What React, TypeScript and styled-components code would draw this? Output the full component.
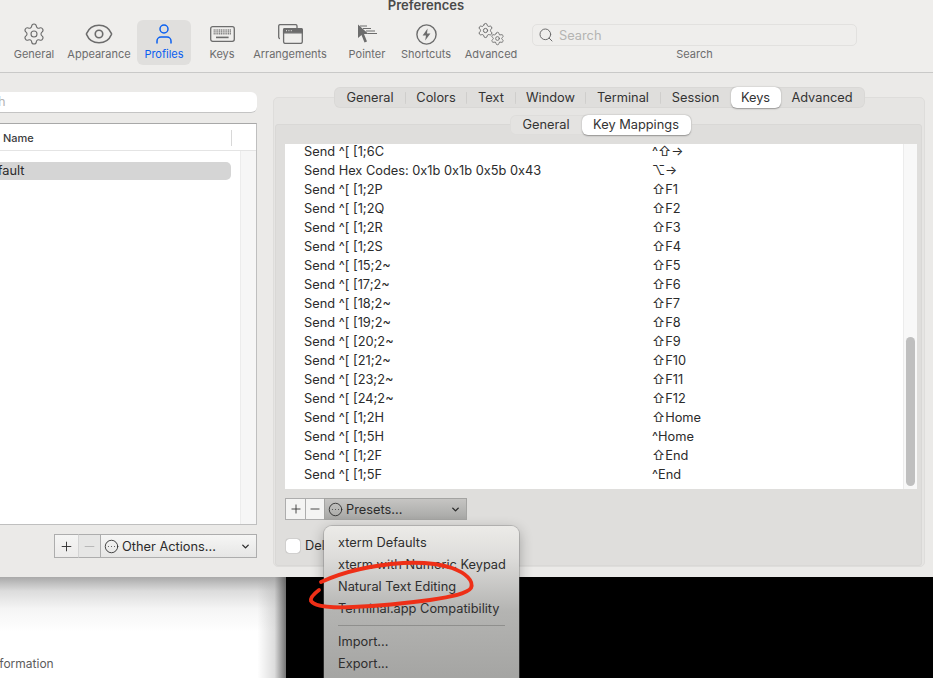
import React from 'react';
import styled, { createGlobalStyle } from 'styled-components';
import { ChevronDown, CircleEllipsis, Eye, Minus, Plus, Search, Settings, User } from 'lucide-react';

const GlobalStyle = createGlobalStyle`
  html, body {
    margin: 0;
    height: 100%;
    overflow: hidden;
    background: #000;
  }
  body {
    font-family: Inter, "Liberation Sans", "DejaVu Sans", sans-serif;
    color: #2b2b2b;
  }
  * {
    box-sizing: border-box;
  }
`;

const Page = styled.div`
  width: 933px;
  height: 678px;
  position: relative;
  overflow: hidden;
`;

const Window = styled.div`
  height: 577px;
  background: #ebeae8;
  box-shadow: 0 1px 0 #b5b5b5;
  display: flex;
  flex-direction: column;
`;

const Toolbar = styled.div`
  height: 73px;
  background: #efeeec;
  border-bottom: 1px solid #c9c9c8;
  flex: none;
`;

const Title = styled.div`
  height: 11px;
  line-height: 11px;
  font-size: 13px;
  font-weight: 600;
  color: #4a4a4a;
  text-align: center;
  padding-right: 81px;
`;

const ToolRow = styled.div`
  display: flex;
  margin-top: 9px;
  height: 45px;
  padding-left: 7px;
`;

const ToolItem = styled.div<{ $active?: boolean; $width: number }>`
  width: ${p => p.$width}px;
  height: 45px;
  flex: none;
  border-radius: 6px;
  background: ${p => (p.$active ? '#e0dfdd' : 'transparent')};
  color: ${p => (p.$active ? '#0a60f0' : '#6c6c6c')};
  display: flex;
  flex-direction: column;
  align-items: center;
  font-size: 11px;
  line-height: 13px;
  white-space: nowrap;
`;

const ToolIcon = styled.div`
  height: 28px;
  display: flex;
  align-items: center;
  justify-content: center;
`;

const ToolSearch = styled.div`
  width: 325px;
  margin-left: -5px;
  padding-top: 4px;
  display: flex;
  flex-direction: column;
  align-items: center;
  font-size: 11px;
  color: #6c6c6c;
`;

const ToolField = styled.div`
  width: 100%;
  height: 22px;
  margin-bottom: 1px;
  border: 1px solid #e2e1df;
  border-radius: 5px;
  display: flex;
  align-items: center;
  gap: 5px;
  padding-left: 5px;
  font-size: 12.8px;
  color: #b4b4b2;
`;

const Body = styled.div`
  flex: 1;
  display: flex;
  min-height: 0;
  padding-top: 14px;
`;

const LeftPane = styled.div`
  width: 317px;
  margin-left: -60px;
  flex: none;
  display: flex;
  flex-direction: column;
`;

const ProfileSearch = styled.div`
  height: 21px;
  margin-top: 5px;
  background: #fff;
  border-radius: 6px;
  border-bottom: 1px solid #c4c4c4;
  font-size: 12.8px;
  line-height: 20px;
  color: #b5b5b5;
  padding-left: 23px;
`;

const ProfileTable = styled.div`
  height: 402px;
  margin-top: 10px;
  border: 1px solid #bfbfbf;
  border-top-color: #a8a8a8;
  background: #fff;
  display: flex;
  flex-direction: column;
`;

const ProfileHead = styled.div`
  height: 27px;
  flex: none;
  border-bottom: 1px solid #e4e4e4;
  display: flex;
  align-items: center;
  font-size: 11px;
  font-weight: 500;
  color: #3c3c3c;
  padding: 2px 0 0 62px;
`;

const HeadDivider = styled.div`
  width: 1px;
  height: 16px;
  background: #d8d8d8;
  margin-left: 197px;
`;

const ProfileBody = styled.div`
  flex: 1;
  display: flex;
`;

const ProfileList = styled.div`
  flex: 1;
  border-right: 1px solid #ececec;
  padding-top: 11px;
`;

const ProfileRow = styled.div`
  height: 18px;
  margin-right: 9px;
  background: #d5d5d5;
  border-radius: 5px;
  font-size: 12.8px;
  line-height: 17px;
  padding-left: 40px;
`;

const ProfileGutter = styled.div`
  width: 15px;
  flex: none;
  background: #f6f6f6;
`;

const ActionRow = styled.div`
  display: flex;
  justify-content: flex-end;
  margin-top: 9px;
  height: 24px;
`;

const SquareButton = styled.div<{ $width: number; $off?: boolean; $dark?: boolean }>`
  width: ${p => p.$width}px;
  flex: none;
  display: flex;
  align-items: center;
  justify-content: center;
  border: 1px solid #adadad;
  margin-right: -1px;
  background: ${p => (p.$dark ? '#f4f4f3' : 'linear-gradient(#f5f5f4, #ecebea)')};
  color: ${p => (p.$off ? '#b4b4b4' : '#303030')};
  ${p => p.$off && 'border-color: #adadad transparent #adadad #d4d4d4; background: #e6e6e5;'}
`;

const PopupButton = styled.div<{ $width: number; $pressed?: boolean }>`
  width: ${p => p.$width}px;
  flex: none;
  display: flex;
  align-items: center;
  gap: 3px;
  padding: 0 5px 0 3px;
  font-size: 12.8px;
  color: #2b2b2b;
  border: 1px solid ${p => (p.$pressed ? '#a4a4a2' : '#adadad')};
  background: ${p => (p.$pressed ? 'linear-gradient(#c6c5c3, #a8a8a6)' : 'linear-gradient(#f6f6f5, #e6e6e5)')};
`;

const PopupLabel = styled.span`
  flex: 1;
`;

const RightPane = styled.div`
  width: 652px;
  margin-left: 16px;
  flex: none;
  display: flex;
  flex-direction: column;
  align-items: center;
`;

const TabBar = styled.div<{ $top?: boolean }>`
  height: ${p => (p.$top ? 21 : 20)}px;
  display: flex;
  align-items: center;
  flex: none;
  position: relative;
  z-index: 2;
  margin-left: ${p => (p.$top ? 0 : 4)}px;
  border-radius: 6px;
  background: ${p => (p.$top ? '#dfdedc' : '#e4e3e1')};
  box-shadow: inset 0 0 0 1px rgba(0, 0, 0, 0.025);
  font-size: 12.8px;
  padding: 0 1px;
  > div {
    padding-bottom: 1px;
  }
`;

const Tab = styled.div<{ $selected?: boolean; $width: number; $line?: boolean }>`
  width: ${p => p.$width}px;
  height: 100%;
  flex: none;
  display: flex;
  align-items: center;
  justify-content: center;
  border-radius: 6px;
  color: #333;
  background: ${p => (p.$line
    ? 'linear-gradient(#cfcecc, #cfcecc) right center / 1px 12px no-repeat'
    : p.$selected ? '#fff' : 'transparent')};
  box-shadow: ${p => (p.$selected ? '0 0.5px 1.5px rgba(0, 0, 0, 0.35)' : 'none')};
`;

const OuterBox = styled.div`
  width: 100%;
  height: 470px;
  margin-top: -11px;
  flex: none;
  background: #e6e5e3;
  border: 1px solid #dedddb;
  border-radius: 5px;
  padding: 17px 2px 0 1px;
  display: flex;
  flex-direction: column;
  align-items: center;
`;

const InnerBox = styled.div`
  width: 100%;
  height: 442px;
  margin-top: -11px;
  flex: none;
  background: #dfdedc;
  border: 1px solid #d9d8d6;
  border-radius: 3px;
  padding: 19px 4px 0 9px;
`;

const MapTable = styled.div`
  height: 345px;
  background: #fff;
  display: flex;
  overflow: hidden;
`;

const MapList = styled.div`
  flex: 1;
  margin-top: -2px;
`;

const MapRow = styled.div`
  height: 19px;
  display: flex;
  align-items: center;
  font-size: 12.8px;
  color: #2b2b2b;
`;

const MapAction = styled.div`
  width: 367px;
  padding-left: 19px;
  flex: none;
  white-space: pre;
`;

const MapKey = styled.div`
  font-family: Inter, "DejaVu Sans", sans-serif;
  white-space: pre;
`;

const MapScroller = styled.div`
  width: 14px;
  flex: none;
  background: #f8f8f8;
  border-left: 1px solid #ececec;
  padding: 0 2px 3px 2px;
  display: flex;
  align-items: flex-end;
`;

const ScrollThumb = styled.div`
  width: 100%;
  height: 149px;
  background: #bfbfbf;
  border-radius: 5px;
`;

const MapActions = styled.div`
  display: flex;
  height: 22px;
  margin-top: 9px;
`;

const DeleteRow = styled.div`
  display: flex;
  align-items: center;
  gap: 5px;
  margin-top: 18px;
  margin-left: 1px;
  font-size: 12.8px;
`;

const Checkbox = styled.div`
  width: 14px;
  height: 14px;
  background: #fff;
  border-radius: 3px;
  box-shadow: 0 0 1px rgba(0, 0, 0, 0.6);
`;

const Below = styled.div`
  height: 101px;
  display: flex;
  background: #000;
`;

const BelowLeft = styled.div`
  width: 286px;
  flex: none;
  background:
    linear-gradient(90deg, rgba(180, 180, 180, 0) 90%, rgba(170, 170, 170, 0.4) 96%, rgba(90, 90, 90, 0.85) 100%),
    linear-gradient(#a9a9a9 0, #dcdcdc 14px, #f5f5f5 32px, #fff 55px);
  font-size: 12px;
  color: #5c5c5c;
  padding: 79px 0 0 0;
  overflow: hidden;
`;

const BelowText = styled.div`
  line-height: 15px;
  margin-left: -11px;
`;

const Menu = styled.div`
  position: absolute;
  left: 324px;
  top: 526px;
  width: 195px;
  height: 162px;
  z-index: 5;
  border-radius: 8px;
  background: linear-gradient(#ecebe8 0, #dedddb 30px, #b4b4b2 85px, #a5a5a3 150px);
  box-shadow: 0 0 0 1px rgba(120, 120, 120, 0.35), 0 4px 14px rgba(0, 0, 0, 0.3);
  padding: 6px 0;
  font-size: 12.8px;
  color: #2e2e2e;
`;

const MenuItem = styled.div`
  height: 22px;
  line-height: 22px;
  padding-left: 14px;
  white-space: nowrap;
`;

const MenuRule = styled.div`
  height: 1px;
  margin: 5px 14px 5px 14px;
  background: #8f8f8d;
`;

const Scribble = styled.svg`
  position: absolute;
  left: 300px;
  top: 555px;
  z-index: 6;
  pointer-events: none;
`;

const iconColor = '#6c6c6c';

function KeyboardIcon() {
  const dots: React.ReactNode[] = [];
  for (let row = 0; row < 3; row++) {
    for (let col = 0; col < 10; col++) {
      dots.push(<rect key={`${row}-${col}`} x={3.6 + col * 1.8} y={3.4 + row * 1.9} width="1.2" height="1.2" fill={iconColor} />);
    }
  }
  return (
    <svg width="25" height="16" viewBox="0 0 25 16" fill="none">
      <rect x="0.7" y="0.7" width="23.6" height="14.6" rx="2" stroke={iconColor} strokeWidth="1.3" />
      {dots}
      <rect x="6" y="10.6" width="12.6" height="1.6" fill={iconColor} />
    </svg>
  );
}

function ArrangementsIcon() {
  return (
    <svg width="25" height="20" viewBox="0 0 25 20" fill="none" stroke={iconColor} strokeWidth="1.3">
      <path d="M2 14.5h-0.2a1.2 1.2 0 0 1-1.1-1.2V2a1.4 1.4 0 0 1 1.4-1.4h15.5A1.4 1.4 0 0 1 19 2v2.4" />
      <rect x="5.6" y="4.6" width="18.7" height="14.8" rx="1.6" />
      <path d="M5.6 5.8a1.2 1.2 0 0 1 1.2-1.2h16.3a1.2 1.2 0 0 1 1.2 1.2v3H5.6z" fill={iconColor} />
      <path d="M8 6.7h1M10.4 6.7h1M12.8 6.7h1" stroke="#efeeec" strokeWidth="1" />
    </svg>
  );
}

function PointerIcon() {
  return (
    <svg width="21" height="20" viewBox="0 0 21 20" fill="none">
      <path d="M1 0.5 L1 14 L4.5 11 L7.5 18.5 L10 17.5 L7 10 L11.5 10 Z" fill={iconColor} />
      <path d="M3 2 H10 M6 4.5 H14 M9 7 H18 M11 9.5 H20" stroke={iconColor} strokeWidth="1.1" />
    </svg>
  );
}

function ShortcutIcon() {
  return (
    <svg width="21" height="21" viewBox="0 0 21 21" fill="none">
      <circle cx="10.5" cy="10.5" r="9.6" stroke={iconColor} strokeWidth="1.4" />
      <path d="M11.6 4.4 L6.6 11.4 H10 L9.2 16.6 L14.4 9.4 H11 Z" fill={iconColor} />
    </svg>
  );
}

const GearStack = styled.div`
  width: 28px;
  height: 24px;
  position: relative;
  > svg:first-child {
    position: absolute;
    left: 0;
    top: 0;
  }
  > svg:last-child {
    position: absolute;
    left: 13px;
    top: 9px;
  }
`;

const tools = [
  { label: 'General', width: 54, icon: <Settings size={24} strokeWidth={1.1} color={iconColor} /> },
  { label: 'Appearance', width: 76, icon: <Eye size={30} strokeWidth={1.3} color={iconColor} /> },
  { label: 'Profiles', width: 54, active: true, icon: <User size={24} strokeWidth={1.5} color="#0a60f0" /> },
  { label: 'Keys', width: 62, icon: <KeyboardIcon /> },
  { label: 'Arrangements', width: 74, icon: <ArrangementsIcon /> },
  { label: 'Pointer', width: 80, icon: <PointerIcon /> },
  { label: 'Shortcuts', width: 38, icon: <ShortcutIcon /> },
  {
    label: 'Advanced',
    width: 92,
    icon: (
      <GearStack>
        <Settings size={17} strokeWidth={1.4} color={iconColor} />
        <Settings size={15} strokeWidth={1.4} color={iconColor} />
      </GearStack>
    ),
  },
];

const topTabs = [
  { label: 'General', width: 71, line: true },
  { label: 'Colors', width: 61, line: true },
  { label: 'Text', width: 49, line: true },
  { label: 'Window', width: 70, line: true },
  { label: 'Terminal', width: 75, line: true },
  { label: 'Session', width: 70 },
  { label: 'Keys', width: 50, selected: true },
  { label: 'Advanced', width: 83 },
];

const mappings = [
  ['Send ^[ [1;6C', '^⇧→'],
  ['Send Hex Codes: 0x1b 0x1b 0x5b 0x43', '⌥→'],
  ['Send ^[ [1;2P', '⇧F1'],
  ['Send ^[ [1;2Q', '⇧F2'],
  ['Send ^[ [1;2R', '⇧F3'],
  ['Send ^[ [1;2S', '⇧F4'],
  ['Send ^[ [15;2~', '⇧F5'],
  ['Send ^[ [17;2~', '⇧F6'],
  ['Send ^[ [18;2~', '⇧F7'],
  ['Send ^[ [19;2~', '⇧F8'],
  ['Send ^[ [20;2~', '⇧F9'],
  ['Send ^[ [21;2~', '⇧F10'],
  ['Send ^[ [23;2~', '⇧F11'],
  ['Send ^[ [24;2~', '⇧F12'],
  ['Send ^[ [1;2H', '⇧Home'],
  ['Send ^[ [1;5H', '^Home'],
  ['Send ^[ [1;2F', '⇧End'],
  ['Send ^[ [1;5F', '^End'],
];

function App() {
  return (
    <Page>
      <GlobalStyle />
      <Window>
        <Toolbar>
          <Title>Preferences</Title>
          <ToolRow>
            {tools.map(tool => (
              <ToolItem key={tool.label} $active={tool.active} $width={tool.width}>
                <ToolIcon>{tool.icon}</ToolIcon>
                {tool.label}
              </ToolItem>
            ))}
            <ToolSearch>
              <ToolField>
                <Search size={16} strokeWidth={1.5} color="#6c6c6c" />
                Search
              </ToolField>
              Search
            </ToolSearch>
          </ToolRow>
        </Toolbar>
        <Body>
          <LeftPane>
            <ProfileSearch>Search</ProfileSearch>
            <ProfileTable>
              <ProfileHead>
                Name
                <HeadDivider />
              </ProfileHead>
              <ProfileBody>
                <ProfileList>
                  <ProfileRow>Default</ProfileRow>
                </ProfileList>
                <ProfileGutter />
              </ProfileBody>
            </ProfileTable>
            <ActionRow>
              <SquareButton $width={25}><Plus size={15} strokeWidth={1.5} /></SquareButton>
              <SquareButton $width={23} $off><Minus size={15} strokeWidth={1.5} /></SquareButton>
              <PopupButton $width={157}>
                <CircleEllipsis size={15} strokeWidth={1.4} />
                <PopupLabel>Other Actions...</PopupLabel>
                <ChevronDown size={11} strokeWidth={3} />
              </PopupButton>
            </ActionRow>
          </LeftPane>
          <RightPane>
            <TabBar $top>
              {topTabs.map(tab => (
                <Tab key={tab.label} $width={tab.width} $selected={tab.selected} $line={tab.line}>
                  {tab.label}
                </Tab>
              ))}
            </TabBar>
            <OuterBox>
              <TabBar>
                <Tab $width={71}>General</Tab>
                <Tab $width={109} $selected>Key Mappings</Tab>
              </TabBar>
              <InnerBox>
                <MapTable>
                  <MapList>
                    {mappings.map(([action, key]) => (
                      <MapRow key={action}>
                        <MapAction>{action}</MapAction>
                        <MapKey>{key}</MapKey>
                      </MapRow>
                    ))}
                  </MapList>
                  <MapScroller>
                    <ScrollThumb />
                  </MapScroller>
                </MapTable>
                <MapActions>
                  <SquareButton $width={21} $dark><Plus size={14} strokeWidth={1.5} /></SquareButton>
                  <SquareButton $width={20} $dark><Minus size={14} strokeWidth={1.5} /></SquareButton>
                  <PopupButton $width={143} $pressed>
                    <CircleEllipsis size={15} strokeWidth={1.4} />
                    <PopupLabel>Presets...</PopupLabel>
                    <ChevronDown size={11} strokeWidth={3} />
                  </PopupButton>
                </MapActions>
                <DeleteRow>
                  <Checkbox />
                  Delete all
                </DeleteRow>
              </InnerBox>
            </OuterBox>
          </RightPane>
        </Body>
      </Window>
      <Below>
        <BelowLeft>
          <BelowText>Information</BelowText>
        </BelowLeft>
      </Below>
      <Menu>
        <MenuItem>xterm Defaults</MenuItem>
        <MenuItem>xterm with Numeric Keypad</MenuItem>
        <MenuItem>Natural Text Editing</MenuItem>
        <MenuItem>Terminal.app Compatibility</MenuItem>
        <MenuRule />
        <MenuItem>Import...</MenuItem>
        <MenuItem>Export...</MenuItem>
      </Menu>
      <Scribble width="180" height="60" viewBox="0 0 180 60" fill="none">
        <path
          d="M21 27 C 45 16, 75 10, 103 8 C 125 7, 140 9, 152 13 C 166 18, 174 26, 171 33 C 167 39, 150 42, 130 45 C 100 49, 75 51, 53 52 C 35 53, 15 52, 11 46 C 10 42, 15 38, 19 35"
          stroke="#ee2f17"
          strokeWidth="3.8"
          strokeLinecap="round"
        />
      </Scribble>
    </Page>
  );
}

export default App;
